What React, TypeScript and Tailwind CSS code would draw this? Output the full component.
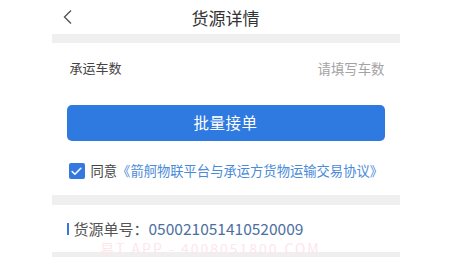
import { Check } from 'lucide-react';

const App = () => {
    return (
        <div className="relative h-[257px] w-full overflow-hidden bg-white font-['Noto_Sans_CJK_SC',sans-serif]">
            <div className="mx-auto w-[348px]">
                {/* header */}
                <div className="relative flex h-[34px] items-center justify-center">
                    <svg className="absolute left-[10px] top-[9px]" width="12" height="16" viewBox="0 0 12 16" fill="none">
                        <path d="M9 1.5 L2.5 8 L9 14.5" stroke="#555" strokeWidth="1.4" />
                    </svg>
                    <span className="text-[17px] leading-none text-[#333]">货源详情</span>
                </div>
                <div className="h-[9px] bg-[#efefef]"></div>

                <div className="px-[15px]">
                    <div className="flex h-[50px] items-center justify-between pl-[3px]">
                        <span className="text-[13px] text-[#444]">承运车数</span>
                        <span className="text-[13.4px] text-[#a3a3a3]">请填写车数</span>
                    </div>
                    <div className="mt-[12px] flex h-[36px] items-center justify-center rounded-[5px] bg-[#2f7ae1]">
                        <span className="text-[15.5px] tracking-[0.5px] text-white">批量接单</span>
                    </div>
                    <div className="flex h-[54px] items-center whitespace-nowrap pt-[6px] pl-[2px]">
                        <div className="flex h-[16px] w-[16px] shrink-0 items-center justify-center rounded-[2px] bg-[#3478e0]">
                            <Check size={13} color="#fff" strokeWidth={3} />
                        </div>
                        <span className="ml-[6px] text-[13.3px] leading-none text-[#444]">同意</span>
                        <span className="text-[13.3px] leading-none text-[#4a8ad8]">《箭舸物联平台与承运方货物运输交易协议》</span>
                    </div>
                </div>
                <div className="h-[10px] bg-[#efefef]"></div>

                <div className="flex h-[47px] items-center pl-[15px]">
                    <div className="h-[12px] w-[2px] bg-[#3478e0]"></div>
                    <span className="ml-[5px] text-[15px] leading-none text-[#555]">货源单号：</span>
                    <span className="text-[15.5px] leading-none text-[#4c6fa2]">050021051410520009</span>
                </div>
                <div className="h-[10px] bg-[#efefef]"></div>
            </div>
            <div className="pointer-events-none absolute left-[100px] top-[241px] text-[14px] leading-none tracking-[2px] text-[#fde6ec]">
                易T APP - 4008051800.COM
            </div>
        </div>
    );
};

export default App;
